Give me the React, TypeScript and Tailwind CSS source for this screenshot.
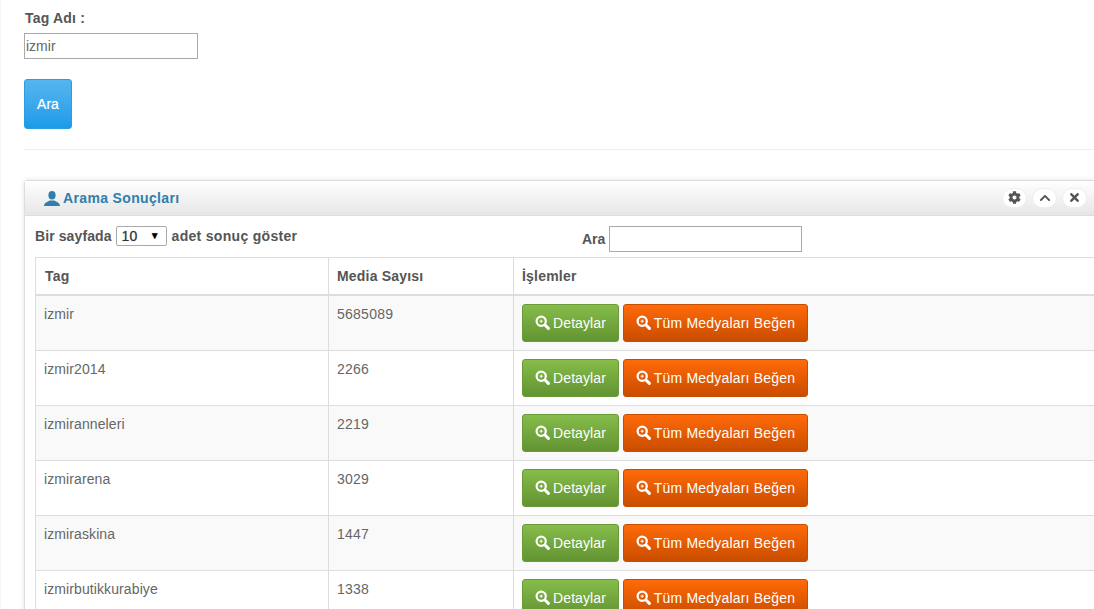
import React from 'react';
import { FaCog, FaChevronUp, FaTimes } from 'react-icons/fa';

const rows = [
  { tag: 'izmir', count: '5685089' },
  { tag: 'izmir2014', count: '2266' },
  { tag: 'izmiranneleri', count: '2219' },
  { tag: 'izmirarena', count: '3029' },
  { tag: 'izmiraskina', count: '1447' },
  { tag: 'izmirbutikkurabiye', count: '1338' },
];

function RoundButton({ children }: { children: React.ReactNode }) {
  return (
    <span className="flex h-[20px] w-[25px] items-center justify-center rounded-full border border-[#eeeeee] bg-white text-[#555555]">
      {children}
    </span>
  );
}

function ZoomIcon() {
  return (
    <svg width="15" height="15" viewBox="0 0 15 15" fill="none" stroke="currentColor" className="-mt-px">
      <circle cx="6.2" cy="6.2" r="4.6" strokeWidth="2.2" />
      <path d="M10 10 L13.4 13.4" strokeWidth="3" strokeLinecap="round" />
      <path d="M4.6 6.2 H7.8 M6.2 4.6 V7.8" strokeWidth="1" />
    </svg>
  );
}

export default function App() {
  return (
    <div className="h-[609px] w-[1094px] overflow-hidden border-l border-[#f7f7f7] bg-white pl-[23px] font-['Liberation_Sans',Arial,sans-serif] text-[13px] text-[#555555]">
      <div className="w-[1090px] pt-[11px]">
        <label className="block pl-px text-[14px] leading-[14px] font-bold tracking-[0.2px]">Tag Adı :</label>
        <input
          readOnly
          value="izmir"
          className="mt-[8px] block h-[26px] w-[174px] border border-[#aaaaaa] px-px text-[14px] text-[#666666] outline-none"
        />
        <button className="mt-5 block h-[50px] w-[48px] rounded-[3px] border border-[#2b9de0] bg-gradient-to-b from-[#55b5ee] to-[#1a9be8] text-[14px] text-white [text-shadow:0_0_1px_rgba(255,255,255,0.5)]">
          Ara
        </button>
        <div className="mt-5 border-t border-[#eeeeee]" />
      </div>

      <div className="mt-[30px] w-[1072px] rounded-t-[3px] border border-[#dddddd] shadow-[0_0_5px_rgba(0,0,0,0.12)]">
        <div className="flex h-[35px] items-center justify-between border-b border-[#dddddd] bg-gradient-to-b from-white to-[#e6e6e6] pl-[19px] pr-2">
          <h2 className="flex items-center gap-[3px] pt-px text-[14px] font-bold tracking-[0.35px] text-[#317eac]">
            <svg width="16" height="15" viewBox="0 0 16 15" fill="currentColor">
              <ellipse cx="8" cy="4.2" rx="3.6" ry="4.2" />
              <path d="M0 15 C0 11.5 3.5 10.8 5.8 9.4 L10.2 9.4 C12.5 10.8 16 11.5 16 15 Z" />
            </svg>
            Arama Sonuçları
          </h2>
          <div className="-mt-px flex gap-[5px]">
            <RoundButton><FaCog className="text-[13px]" /></RoundButton>
            <RoundButton><FaChevronUp className="text-[12px]" /></RoundButton>
            <RoundButton><FaTimes className="text-[13px]" /></RoundButton>
          </div>
        </div>

        <div className="bg-white px-[10px]">
          <div className="flex h-[41px] items-start pt-[10px]">
            <div className="flex w-[547px] items-center text-[14px] leading-[20px] font-bold">
              <span className="tracking-[0.1px]">Bir sayfada</span>
              <span className="relative mr-[5px] ml-[4px] flex h-[20px] w-[51px] items-center rounded-[2px] border border-[#aaaaaa] pl-[5px] font-normal text-[#333333] [text-shadow:0_0_1px_rgba(51,51,51,0.5)]">
                10
                <span className="absolute right-[6px] text-[10px] text-black">▼</span>
              </span>
              <span className="tracking-[0.3px]">adet sonuç göster</span>
            </div>
            <div className="flex items-center text-[14px] font-bold">
              <span>Ara</span>
              <span className="ml-[4px] h-[26px] w-[193px] border border-[#aaaaaa] bg-white" />
            </div>
          </div>

          <table className="w-[1075px] table-fixed border-separate border-spacing-0 border-t border-l border-[#dddddd] text-left">
            <colgroup>
              <col className="w-[293px]" />
              <col className="w-[185px]" />
              <col />
            </colgroup>
            <thead>
              <tr>
                <th className="h-[38px] border-r border-b-2 border-[#dddddd] pl-[9px] text-[14px] font-bold tracking-[0.2px]">Tag</th>
                <th className="h-[38px] border-r border-b-2 border-[#dddddd] pl-2 text-[14px] font-bold tracking-[0.2px]">Media Sayısı</th>
                <th className="h-[38px] border-b-2 border-[#dddddd] pl-2 text-[14px] font-bold tracking-[0.2px]">İşlemler</th>
              </tr>
            </thead>
            <tbody>
              {rows.map((row, index) => (
                <tr key={index} className={index % 2 === 0 ? 'bg-[#f9f9f9]' : 'bg-white'}>
                  <td className="h-[55px] border-r border-b border-[#dddddd] pt-[9px] pl-2 align-top text-[14px] leading-[18px] tracking-[0.1px] text-[#666666]">{row.tag}</td>
                  <td className="h-[55px] border-r border-b border-[#dddddd] pt-[9px] pl-2 align-top text-[14px] leading-[18px] tracking-[0.25px] text-[#666666]">{row.count}</td>
                  <td className="h-[55px] border-b border-[#dddddd] pl-2 align-middle">
                    <div className="flex gap-1">
                      <button className="flex h-[38px] w-[97px] items-center justify-center gap-[3px] rounded-[3px] border border-[#6a9a35] bg-gradient-to-b from-[#86bc4a] to-[#629432] text-[14px] tracking-[0.1px] text-white">
                        <ZoomIcon />
                        Detaylar
                      </button>
                      <button className="flex h-[38px] w-[185px] items-center justify-center gap-[3px] rounded-[3px] border border-[#c44f00] bg-gradient-to-b from-[#ff6a0a] to-[#c94d00] text-[14px] tracking-[0.2px] text-white">
                        <ZoomIcon />
                        Tüm Medyaları Beğen
                      </button>
                    </div>
                  </td>
                </tr>
              ))}
            </tbody>
          </table>
        </div>
      </div>
    </div>
  );
}
